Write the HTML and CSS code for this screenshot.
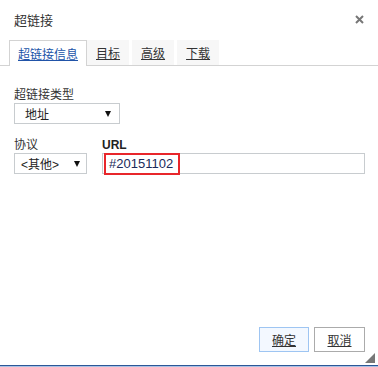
FILE: index.html
```html
<!DOCTYPE html>
<html lang="zh-CN">
<head>
  <meta charset="UTF-8">
  <title>超链接</title>
  <link rel="stylesheet" href="styles.css">
</head>
<body>
  <div class="dialog">

    <!-- Title bar -->
    <div class="dialog-head">
      <span class="dialog-title">超链接</span>
      <svg class="close-icon" width="9" height="9" viewBox="0 0 9 9">
        <path d="M1 1L8 8M8 1L1 8" stroke="#777" stroke-width="2"/>
      </svg>
    </div>

    <!-- Tabs -->
    <div class="tabs">
      <span class="tab tab--active">超链接信息</span>
      <span class="tab">目标</span>
      <span class="tab">高级</span>
      <span class="tab">下载</span>
    </div>

    <!-- Form body -->
    <div class="dialog-body">
      <div class="field-label">超链接类型</div>
      <div class="select select--type">
        <span>地址</span>
        <span class="select-arrow"></span>
      </div>

      <div class="field-row">
        <div class="field field--protocol">
          <div class="field-label">协议</div>
          <div class="select select--protocol">
            <span>&lt;其他&gt;</span>
            <span class="select-arrow"></span>
          </div>
        </div>
        <div class="field field--url">
          <div class="field-label field-label--bold">URL</div>
          <div class="text-input">
            <span class="marked-value">#20151102</span>
          </div>
        </div>
      </div>
    </div>

    <!-- Buttons -->
    <div class="dialog-foot">
      <span class="btn btn--ok">确定</span>
      <span class="btn">取消</span>
    </div>

    <span class="resize-grip"></span>
  </div>
</body>
</html>
```

FILE: styles.css
```css
html, body {
  margin: 0;
  height: 100%;
  overflow: hidden;
  background: #fff;
}

body {
  font-family: "Liberation Sans", "Noto Sans CJK SC", sans-serif;
  color: #333;
}

/* Dialog frame */
.dialog {
  position: relative;
  height: 365px;
  display: flex;
  flex-direction: column;
  border-bottom: 1px solid #2c5797;
  box-shadow: 0 1px 0 #a9c1e4;
}

.dialog-head {
  height: 38px;
  padding: 0 14px;
  display: flex;
  align-items: center;
  justify-content: space-between;
}

.dialog-title {
  font-size: 13px;
  color: #333;
}

.close-icon {
  display: block;
}

/* Tabs */
.tabs {
  margin-top: 2px;
  padding-left: 9px;
  display: flex;
  gap: 3px;
  border-bottom: 1px solid #d3d3d3;
}

.tab {
  box-sizing: border-box;
  height: 25px;
  padding: 0 9px;
  display: flex;
  align-items: center;
  font-size: 12px;
  color: #333;
  text-decoration: underline;
  background: #f7f7f7;
}

.tab--active {
  height: 26px;
  margin-bottom: -1px;
  margin-right: -3px;
  padding: 0 8px;
  background: #fff;
  color: #2154a8;
  border: 1px solid #d3d3d3;
  border-bottom: none;
}

/* Form */
.dialog-body {
  flex: 1;
  padding: 22px 13px 0 14px;
}

.field-label {
  font-size: 12px;
  line-height: 15px;
  color: #333;
}

.field-label--bold {
  font-weight: bold;
  color: #222;
}

.select {
  box-sizing: border-box;
  height: 21px;
  border: 1px solid #c8cccf;
  display: flex;
  align-items: center;
  justify-content: space-between;
  font-size: 12px;
  color: #222;
  background: #fff;
}

.select--type {
  width: 106px;
  padding: 0 8px 0 10px;
}

.select--protocol {
  width: 73px;
  padding: 0 6px 0 6px;
}

.select-arrow {
  width: 0;
  height: 0;
  border-left: 3px solid transparent;
  border-right: 3px solid transparent;
  border-top: 6px solid #111;
}

.field-row {
  margin-top: 14px;
  display: flex;
  gap: 15px;
}

.field--url {
  flex: 1;
}

.text-input {
  box-sizing: border-box;
  height: 21px;
  border: 1px solid #c8cccf;
  padding-left: 1px;
  display: flex;
  align-items: flex-start;
}

/* red marker drawn around the value */
.marked-value {
  box-sizing: border-box;
  width: 76px;
  height: 22px;
  margin-top: -1px;
  padding-left: 3px;
  border: 2px solid #e8262b;
  font-size: 13px;
  line-height: 18px;
  color: #1a2a5a;
}

/* Footer buttons */
.dialog-foot {
  padding: 0 13px 13px 0;
  display: flex;
  justify-content: flex-end;
  gap: 5px;
}

.btn {
  box-sizing: border-box;
  height: 25px;
  width: 51px;
  display: flex;
  align-items: center;
  justify-content: center;
  font-size: 12px;
  color: #333;
  text-decoration: underline;
  border: 1px solid #ababab;
  background: #fff;
}

.btn--ok {
  width: 50px;
  border-color: #9ec5f2;
  background: #f3f8ff;
}

.resize-grip {
  position: absolute;
  right: 3px;
  bottom: 2px;
  width: 0;
  height: 0;
  border-left: 10px solid transparent;
  border-bottom: 10px solid #777;
}
```
